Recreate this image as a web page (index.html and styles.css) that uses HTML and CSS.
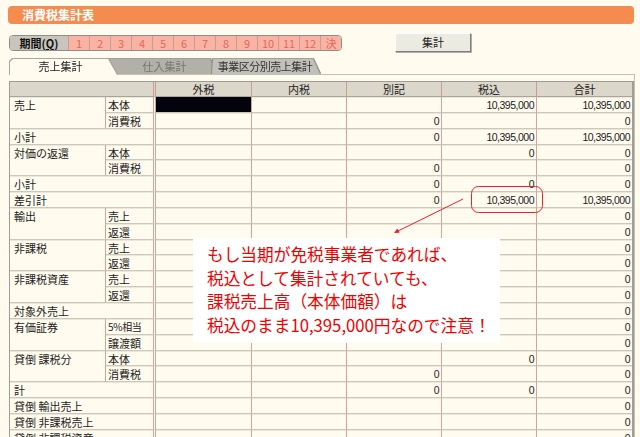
FILE: index.html
```html
<!DOCTYPE html>
<html lang="ja">
<head>
<meta charset="utf-8">
<title>消費税集計表</title>
<link rel="stylesheet" href="styles.css">
</head>
<body>
<div class="title">消費税集計表</div>

<div class="toolbar">
  <div class="period">
    <div class="plabel">期間(<u>Q</u>)</div>
    <div class="pc">1</div><div class="pc">2</div><div class="pc">3</div><div class="pc">4</div>
    <div class="pc">5</div><div class="pc">6</div><div class="pc">7</div><div class="pc">8</div>
    <div class="pc">9</div><div class="pc">10</div><div class="pc">11</div><div class="pc">12</div>
    <div class="pc">決</div>
  </div>
  <div class="btn">集計</div>
</div>

<div class="tabs">
  <div class="tabw tw1"><div class="tab t1">売上集計</div></div>
  <div class="tabw tw2"><div class="tab t2">仕入集計</div></div>
  <div class="tabw tw3"><div class="tab t3">事業区分別売上集計</div></div>
</div>

<div class="panel">
  <div class="grid">
    <div class="h h0"></div><div class="h">外税</div><div class="h">内税</div><div class="h">別記</div><div class="h">税込</div><div class="h e">合計</div>

    <div class="c l1 r2">売上</div><div class="c l2">本体</div><div class="c n blk"></div><div class="c n"></div><div class="c n"></div><div class="c n">10,395,000</div><div class="c n e">10,395,000</div>
    <div class="c l2">消費税</div><div class="c n"></div><div class="c n"></div><div class="c n">0</div><div class="c n"></div><div class="c n e">0</div>
    <div class="c l12">小計</div><div class="c n"></div><div class="c n"></div><div class="c n">0</div><div class="c n">10,395,000</div><div class="c n e">10,395,000</div>

    <div class="c l1 r2">対価の返還</div><div class="c l2">本体</div><div class="c n"></div><div class="c n"></div><div class="c n"></div><div class="c n">0</div><div class="c n e">0</div>
    <div class="c l2">消費税</div><div class="c n"></div><div class="c n"></div><div class="c n">0</div><div class="c n"></div><div class="c n e">0</div>
    <div class="c l12">小計</div><div class="c n"></div><div class="c n"></div><div class="c n">0</div><div class="c n">0</div><div class="c n e">0</div>
    <div class="c l12">差引計</div><div class="c n"></div><div class="c n"></div><div class="c n">0</div><div class="c n">10,395,000</div><div class="c n e">10,395,000</div>

    <div class="c l1 r2">輸出</div><div class="c l2">売上</div><div class="c n"></div><div class="c n"></div><div class="c n"></div><div class="c n"></div><div class="c n e">0</div>
    <div class="c l2">返還</div><div class="c n"></div><div class="c n"></div><div class="c n"></div><div class="c n"></div><div class="c n e">0</div>

    <div class="c l1 r2">非課税</div><div class="c l2">売上</div><div class="c n"></div><div class="c n"></div><div class="c n"></div><div class="c n"></div><div class="c n e">0</div>
    <div class="c l2">返還</div><div class="c n"></div><div class="c n"></div><div class="c n"></div><div class="c n"></div><div class="c n e">0</div>

    <div class="c l1 r2">非課税資産</div><div class="c l2">売上</div><div class="c n"></div><div class="c n"></div><div class="c n"></div><div class="c n"></div><div class="c n e">0</div>
    <div class="c l2">返還</div><div class="c n"></div><div class="c n"></div><div class="c n"></div><div class="c n"></div><div class="c n e">0</div>

    <div class="c l12">対象外売上</div><div class="c n"></div><div class="c n"></div><div class="c n"></div><div class="c n"></div><div class="c n e">0</div>

    <div class="c l1 r2">有価証券</div><div class="c l2 sm">5%相当</div><div class="c n"></div><div class="c n"></div><div class="c n"></div><div class="c n"></div><div class="c n e">0</div>
    <div class="c l2">譲渡額</div><div class="c n"></div><div class="c n"></div><div class="c n"></div><div class="c n"></div><div class="c n e">0</div>

    <div class="c l1 r2">貸倒 課税分</div><div class="c l2">本体</div><div class="c n"></div><div class="c n"></div><div class="c n"></div><div class="c n">0</div><div class="c n e">0</div>
    <div class="c l2">消費税</div><div class="c n"></div><div class="c n"></div><div class="c n">0</div><div class="c n"></div><div class="c n e">0</div>

    <div class="c l12">計</div><div class="c n"></div><div class="c n"></div><div class="c n">0</div><div class="c n">0</div><div class="c n e">0</div>
    <div class="c l12">貸倒 輸出売上</div><div class="c n"></div><div class="c n"></div><div class="c n"></div><div class="c n"></div><div class="c n e">0</div>
    <div class="c l12">貸倒 非課税売上</div><div class="c n"></div><div class="c n"></div><div class="c n"></div><div class="c n"></div><div class="c n e">0</div>
    <div class="c l12">貸倒 非課税資産</div><div class="c n"></div><div class="c n"></div><div class="c n"></div><div class="c n"></div><div class="c n e">0</div>
  </div>
</div>

<div class="note">もし当期が免税事業者であれば、<br>税込として集計されていても、<br>課税売上高（本体価額）は<br>税込のまま10,395,000円なので注意！</div>

<svg class="marks" width="640" height="437" viewBox="0 0 640 437">
  <rect x="471.5" y="186.5" width="71" height="26" rx="7" ry="7" fill="none" stroke="#e8232b" stroke-width="1"/>
  <line x1="463" y1="199" x2="398" y2="231" stroke="#e8232b" stroke-width="1"/>
  <polygon points="394,233 399.6,232.8 397.4,228.6" fill="#e8232b"/>
</svg>
</body>
</html>
```

FILE: styles.css
```css
html, body {
  margin: 0;
  padding: 0;
}
body {
  width: 640px;
  height: 437px;
  overflow: hidden;
  position: relative;
  background: #fffbee;
  font-family: "Noto Sans CJK JP", "Noto Sans", sans-serif;
  font-size: 11px;
  color: #1c1c1c;
  padding-top: 6px;
  box-sizing: border-box;
}

.title {
  margin-left: 8px;
  width: 626px;
  height: 18px;
  box-sizing: border-box;
  padding-left: 14px;
  background: #f68b50;
  border-radius: 4px;
  color: #ffffff;
  font-weight: 700;
  font-size: 12px;
  line-height: 18px;
}

.toolbar {
  display: flex;
  align-items: center;
  margin: 9px 0 0 9px;
  height: 19px;
}
.period {
  display: flex;
  height: 16px;
  box-sizing: border-box;
  border: 1px solid #8d8d8d;
  border-radius: 4px;
  overflow: hidden;
  line-height: 14px;
}
.plabel {
  width: 58px;
  background: #c9c5bc;
  text-align: center;
  font-weight: 700;
  color: #111;
}
.pc {
  width: 20px;
  border-left: 1px solid #d19a8d;
  background: #f9b3a4;
  color: #e2695a;
  text-align: center;
}
.btn {
  margin-left: 53px;
  width: 76px;
  height: 19px;
  box-sizing: border-box;
  background: #ecebe1;
  border: 1px solid;
  border-color: #ffffff #7e7e7e #7e7e7e #ffffff;
  box-shadow: 1px 1px 0 #b0aea6;
  text-align: center;
  line-height: 17px;
  color: #1a1a1a;
}

.tabs {
  display: flex;
  margin: 7px 0 0 10px;
  height: 15px;
}
.tabw {
  height: 15px;
}
.tw1 {
  z-index: 3;
  height: 16px;
  filter: drop-shadow(1px 0 0 #aaa69c) drop-shadow(-1px 0 0 #aaa69c) drop-shadow(0 -1px 0 #aaa69c);
}
.tw2 {
  z-index: 1;
  margin-left: -10px;
  filter: drop-shadow(1px 0 0 #8f8e88) drop-shadow(0 -1px 0 #a09f98);
}
.tw3 {
  z-index: 2;
  margin-left: -4px;
  filter: drop-shadow(1px 0 0 #8f8e88) drop-shadow(-1px 0 0 #8f8e88) drop-shadow(0 -1px 0 #a09f98);
}
.tab {
  height: 100%;
  box-sizing: border-box;
  line-height: 15px;
  text-align: center;
}
.t1 {
  width: 107px;
  padding-right: 6px;
  background: #fffbee;
  color: #1a1a1a;
  clip-path: polygon(0 100%, 0 3px, 3px 0, calc(100% - 9px) 0, 100% 100%);
}
.t2 {
  width: 109px;
  padding-left: 6px;
  background: #b2b1a9;
  color: #77766f;
  clip-path: polygon(0 100%, 0 0, calc(100% - 6px) 0, 100% 100%);
}
.t3 {
  width: 108px;
  padding-right: 2px;
  background: #c2c1b9;
  color: #333333;
  letter-spacing: -0.5px;
  clip-path: polygon(0 100%, 1px 0, calc(100% - 7px) 0, 100% 100%);
}

.panel {
  margin-left: 9px;
  width: 625px;
  border-top: 1px solid #c4c0b4;
  border-right: 1px solid #c4c0b4;
  padding-top: 6px;
}

.grid {
  display: grid;
  grid-template-columns: 96px 50px 96px 95px 95px 95px 95px;
  grid-template-rows: 15px;
  grid-auto-rows: 15.85px;
  width: max-content;
  border-top: 1px solid #9f9b92;
  border-left: 1px solid #a19d94;
  border-right: 2px solid #a19d94;
}
.h {
  box-sizing: border-box;
  background: #dcd7cb;
  border-right: 1px solid #cf9d90;
  border-bottom: 1px solid #a9a59b;
  text-align: center;
  line-height: 14px;
  color: #222;
}
.h0 {
  grid-column: span 2;
  border-right: 3px double #cf9d90;
}
.c {
  box-sizing: border-box;
  border-right: 1px solid #d4a296;
  border-bottom: 1px solid #cdc8bc;
  box-shadow: inset 0 1px 0 #ece7db;
  padding-top: 1px;
  line-height: 14px;
  white-space: nowrap;
  overflow: hidden;
}
.l1 {
  padding-left: 4px;
}
.r2 {
  grid-row: span 2;
}
.l2 {
  padding-left: 2px;
  border-right: 3px double #d4a296;
}
.l12 {
  grid-column: span 2;
  padding-left: 4px;
  border-right: 3px double #d4a296;
}
.sm {
  font-size: 10px;
  letter-spacing: -0.3px;
}
.n {
  text-align: right;
  padding-right: 2px;
  font-family: "Liberation Sans", Arial, sans-serif;
  font-size: 10.5px;
  letter-spacing: -0.5px;
}
.e {
  border-right: none;
}
.blk {
  background: #03030e;
  box-shadow: none;
}

.note {
  position: absolute;
  left: 193px;
  top: 238px;
  width: 307px;
  height: 105px;
  box-sizing: border-box;
  padding: 5px 0 0 14px;
  background: #ffffff;
  color: #f20000;
  font-size: 16.7px;
  line-height: 23.5px;
  white-space: nowrap;
}
.marks {
  position: absolute;
  left: 0;
  top: 0;
  pointer-events: none;
}
```
